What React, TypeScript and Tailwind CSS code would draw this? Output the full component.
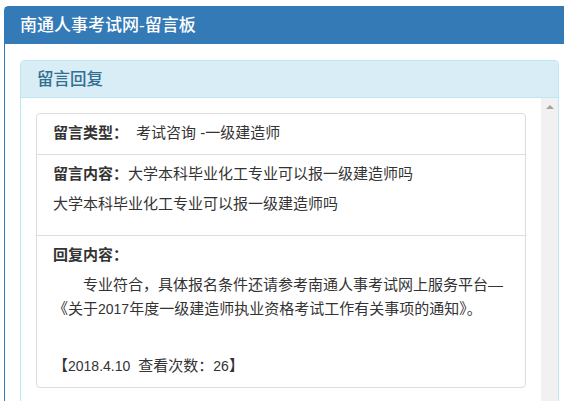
import React from "react";

export default function App() {
  return (
    <div
      className="w-[564px] h-[401px] overflow-hidden bg-white pt-[6px] pl-[4px] text-[#333]"
      style={{ fontFamily: '"Liberation Sans", "Noto Sans CJK SC", sans-serif' }}
    >
      <div className="w-[571px] h-[500px] border border-[#337ab7] rounded-t-[4px] bg-white">
        <div className="h-[37px] bg-[#337ab7] pl-[15px] flex items-center text-white text-[17px] font-medium">
          南通人事考试网-留言板
        </div>
        <div className="pt-[16px] px-[15px]">
          <div className="w-[539px] border border-[#bce8f1] rounded-[4px]">
            <div className="h-[37px] bg-[#d9edf7] border-b border-[#bce8f1] rounded-t-[3px] pl-[16px] flex items-center text-[#31708f] text-[16.5px] font-medium">
              留言回复
            </div>
            <div className="flex">
              <div className="flex-1 p-[15px]">
                <div className="border border-[#ddd] rounded-[4px] text-[15px]">
                  <div className="px-[16px] pt-[8px] pb-[10px] leading-[22px] border-b border-[#ddd]">
                    <span className="font-bold">留言类型：</span>
                    <span className="ml-[8px]">考试咨询 -一级建造师</span>
                  </div>
                  <div className="px-[16px] pt-[8px] pb-[20px] leading-[22px] border-b border-[#ddd]">
                    <div>
                      <span className="font-bold">留言内容：</span>
                      大学本科毕业化工专业可以报一级建造师吗
                    </div>
                    <div className="mt-[8px]">大学本科毕业化工专业可以报一级建造师吗</div>
                  </div>
                  <div className="px-[16px] pt-[8px] pb-[9px]">
                    <div className="leading-[22px] font-bold">回复内容：</div>
                    <p className="mt-[7px] leading-[24px] indent-[2em] whitespace-nowrap">
                      专业符合，具体报名条件还请参考南通人事考试网上服务平台—
                    </p>
                    <p className="leading-[24px] whitespace-nowrap">
                      《关于<span className="text-[14px]">2017</span>年度一级建造师执业资格考试工作有关事项的通知》。
                    </p>
                    <div className="mt-[33px] leading-[24px]">
                      【<span className="text-[14px]">2018.4.10</span>
                      <span className="ml-[8px]">查看次数：</span>
                      <span className="text-[14px]">26</span>】
                    </div>
                  </div>
                </div>
              </div>
              <div className="w-[17px] bg-[#f1f1f1] flex flex-col items-center">
                <div className="mt-[7px] w-0 h-0 border-l-[4px] border-r-[4px] border-b-[4px] border-l-transparent border-r-transparent border-b-[#a3a3a3]" />
              </div>
            </div>
          </div>
        </div>
      </div>
    </div>
  );
}
